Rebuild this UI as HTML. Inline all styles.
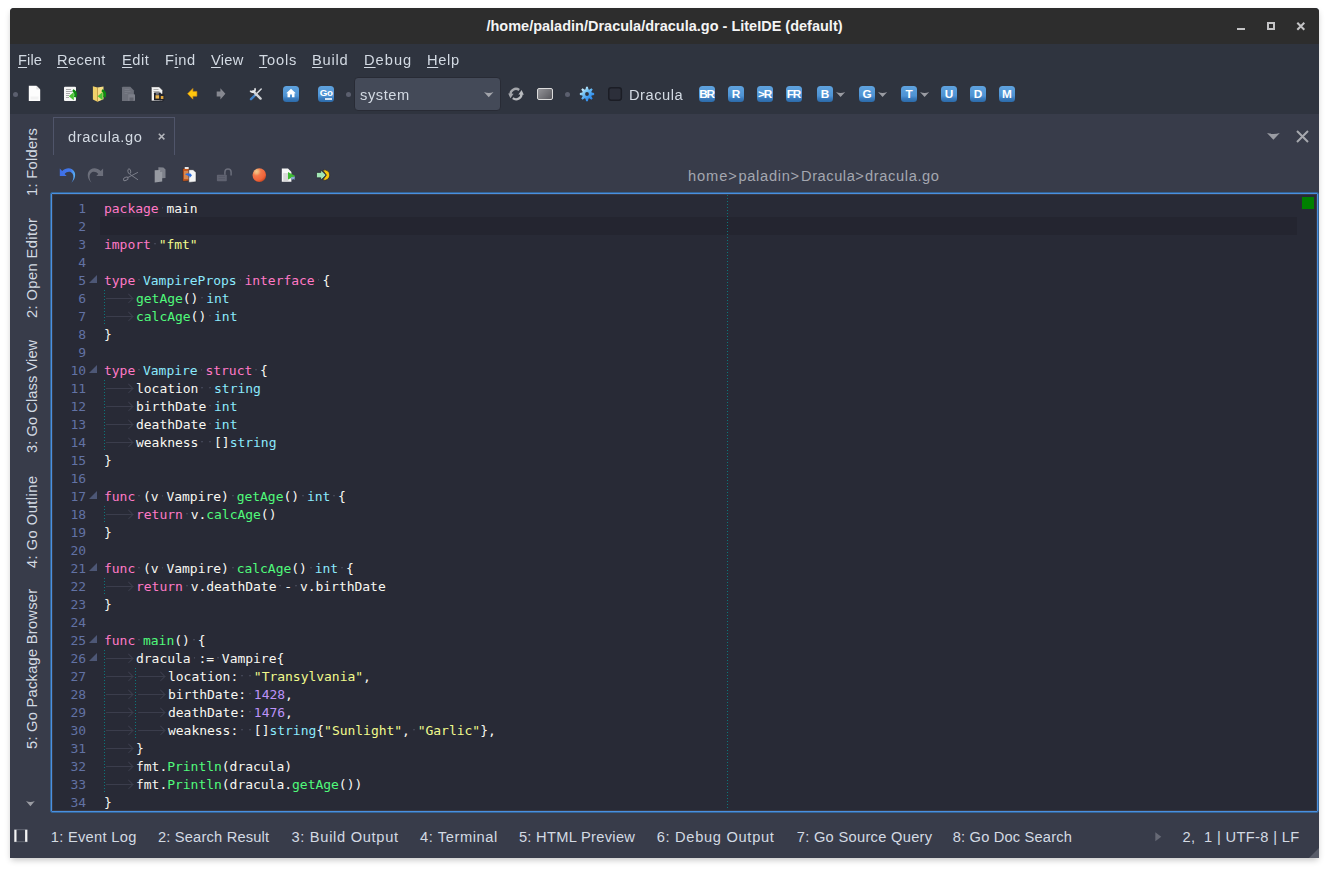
<!DOCTYPE html>
<html lang="en"><head><meta charset="utf-8"><title>/home/paladin/Dracula/dracula.go - LiteIDE (default)</title>
<style>
*{box-sizing:border-box;margin:0;padding:0}
html,body{width:1329px;height:869px;overflow:hidden;background:#fff}
body{position:relative;font-family:"Liberation Sans","DejaVu Sans",sans-serif;font-size:14.67px;color:#d3dae3}
.abs{position:absolute}
#win{position:absolute;left:10px;top:8px;width:1309px;height:850px;background:#383c4a;border-radius:4px 4px 0 0;overflow:hidden;box-shadow:0 0 0 0 transparent}
#shadow{position:absolute;left:10px;top:8px;width:1309px;height:850px;border-radius:4px 4px 0 0;box-shadow:0 3px 6px -1.5px rgba(0,0,0,.23)}
#title{position:absolute;left:0;top:0;width:1309px;height:36px;background:#2d2d2d}
#title .t{position:absolute;left:0;width:1309px;top:9px;text-align:center;font-weight:bold;font-size:14.5px;margin:0;line-height:18px;color:#f4f4f4;white-space:pre}
.ui{position:absolute;white-space:pre;line-height:18px;height:18px;letter-spacing:.3px}
.gs{will-change:transform}
.ui u{text-decoration:underline;text-decoration-thickness:1px;text-underline-offset:2px}
.side{position:absolute;white-space:pre;line-height:18px;height:18px;transform-origin:0 0;transform:rotate(-90deg);letter-spacing:.3px}
svg{position:absolute;overflow:visible}
.bi{position:absolute;width:16px;height:16px;border-radius:3.5px;background:linear-gradient(#5fa2de 0%,#4e93d4 62%,#3a7bbd 78%,#2c6aa8 100%);color:#fff;font-weight:bold;font-size:11.8px;line-height:17px;text-align:center;letter-spacing:-1px;white-space:pre;overflow:hidden}
#ed{position:absolute;left:40px;top:184px;width:1269px;height:621px;background:#282a36;border:1px solid #346496;border-radius:2px;box-shadow:inset 0 0 0 1px #4a90e0,inset 0 0 0 2px #3a3a45}
#edi{position:absolute;left:2px;top:1px;width:1264px;height:618px}
.ln{position:absolute;left:0;height:18px;line-height:18px;white-space:pre;font-family:"DejaVu Sans Mono","Liberation Mono",monospace;font-size:13px;letter-spacing:-0.026px}
.num{position:absolute;left:0;width:33px;text-align:right;color:#6272a4}
.code{position:absolute;left:51px;color:#f8f8f2;tab-size:4}
.kw{color:#ff79c6} .ty{color:#8be9fd} .fn{color:#50fa7b} .st{color:#f1fa8c} .nu{color:#bd93f9}
.sp{background:radial-gradient(circle at 50% 45%,#424555 0,#424555 .55px,transparent 1.05px)}
.tab{display:inline-block;width:32px;height:18px;vertical-align:top;position:relative}
.tab::before{content:"";position:absolute;left:2px;width:27px;top:8px;height:1px;background:#3b3d4c}
.tab::after{content:"";position:absolute;left:21.4px;top:5.3px;width:6.4px;height:6.4px;border-top:1px solid #3b3d4c;border-right:1px solid #3b3d4c;transform:rotate(45deg)}
.fold{position:absolute;left:36px;width:0;height:0;border-left:8px solid transparent;border-bottom:8px solid #4d5776}
.guide{position:absolute;width:1px;background:repeating-linear-gradient(to bottom,#0b777b 0,#0b777b 1px,transparent 1px,transparent 3px)}
</style></head>
<body>
<div id="shadow"></div>
<div id="win">
<header id="title"><h1 class="t">/home/paladin/Dracula/dracula.go - LiteIDE (default)</h1>
<svg style="left:1225px;top:12px" width="74" height="12" viewBox="0 0 74 12"><rect x="2" y="8" width="8" height="2" fill="#c4c4c6"/><rect x="33" y="3" width="6" height="6" fill="none" stroke="#c4c4c6" stroke-width="2"/><path d="M62.3 2.8l7 7M69.3 2.8l-7 7" stroke="#c4c4c6" stroke-width="2" fill="none"/></svg>
</header>
<nav id="menubar" aria-label="Menu bar" style="position:absolute;left:0px;top:36px;width:1309px;height:32px;background:#2f343f">
<div class="ui gs" style="left:8.4px;top:7px;letter-spacing:0.100px;"><u>F</u>ile</div>
<div class="ui gs" style="left:47.22px;top:7px;letter-spacing:0.396px;"><u>R</u>ecent</div>
<div class="ui gs" style="left:112.3px;top:7px;letter-spacing:0.540px;"><u>E</u>dit</div>
<div class="ui gs" style="left:155.44px;top:7px;letter-spacing:0.513px;">F<u>i</u>nd</div>
<div class="ui gs" style="left:201.24px;top:7px;letter-spacing:0.300px;"><u>V</u>iew</div>
<div class="ui gs" style="left:248.8px;top:7px;letter-spacing:0.760px;"><u>T</u>ools</div>
<div class="ui gs" style="left:302.2px;top:7px;letter-spacing:0.740px;"><u>B</u>uild</div>
<div class="ui gs" style="left:354.14px;top:7px;letter-spacing:1.020px;"><u>D</u>ebug</div>
<div class="ui gs" style="left:417.2px;top:7px;letter-spacing:0.647px;"><u>H</u>elp</div>
</nav>
<div id="toolbar" style="position:absolute;left:0px;top:68px;width:1309px;height:38px;background:#2f343f">
<div class="abs" style="left:3px;top:16px;width:5px;height:5px;border-radius:50%;background:#5b5f6e"></div>
<div class="abs" style="left:335.9px;top:16px;width:5px;height:5px;border-radius:50%;background:#5b5f6e"></div>
<div class="abs" style="left:554.9px;top:16px;width:5px;height:5px;border-radius:50%;background:#5b5f6e"></div>
<svg style="left:17px;top:8px" width="16" height="20" viewBox="27 84 16 20"><path d="M28.800 85.800h7.600l3.800 3.800v11.400h-11.400z" fill="#fdfdfd"/><path d="M36.400 85.800v3.800h3.800z" fill="#e4e4e4"/><path d="M30.500 96.500h8v3h-8z" fill="#f3f3f3"/></svg>
<svg style="left:52px;top:8px" width="18" height="20" viewBox="62 84 18 20"><rect x="64" y="86.800" width="12" height="14.200" rx="1" fill="#f6f6f6"/><path d="M66 89.500h5M66 91.500h6M66 93.500h4M66 95.500h3M66 97.500h3" stroke="#a2a2a2" stroke-width=".9"/><path d="M73.200 89.300c3.200 1.200 4.600 4 3.200 8.200l-2.400 -.600c.800-2.600 .200-4.600-1.800-5.600z" fill="#0c8a10"/><path d="M68.800 96.200l5-4.200v8.200z" fill="#4cc437"/></svg>
<svg style="left:81px;top:8px" width="18" height="20" viewBox="91 84 18 20"><path d="M92.900 86.200l4.600 1.400v14.100l-4.600-2.200z" fill="#f0d16a"/><path d="M97.500 87.600l6-1v12.600l-6 2.500z" fill="#f6dd85"/><path d="M97.500 87.600v14.100" stroke="#c79a3a" stroke-width=".7"/><path d="M102.400 89.300c3.200 1.200 4.600 4 3.200 8.200l-2.400 -.600c.800-2.600 .200-4.600-1.800-5.600z" fill="#0c8a10"/><path d="M97.600 96.200l5-4.200v8.200z" fill="#4cc437"/></svg>
<svg style="left:110px;top:8px" width="18" height="20" viewBox="120 84 18 20"><path d="M122.700 86.800h7.600l3.600 3.600v10.600h-11.900v-13.500z" fill="#6d707a"/><rect x="128.200" y="94.200" width="6.800" height="6.800" rx=".8" fill="#7c7f89"/><rect x="129.500" y="97.500" width="4" height="3.500" fill="#62656f"/><path d="M124.500 89.500h5M124.500 91.500h6M124.500 93.500h3" stroke="#7b7e88" stroke-width=".8"/></svg>
<svg style="left:139px;top:8px" width="18" height="20" viewBox="149 84 18 20"><path d="M151.800 86.700h7.400l3.600 3.600v10.800h-11.600v-13.800z" fill="#f2f2f2" stroke="#20222a" stroke-width=".8"/><path d="M153.500 89.500h5M153.500 91.500h6" stroke="#9a9a9a" stroke-width=".8"/><rect x="154" y="92.600" width="6.800" height="7.600" rx=".6" fill="#1d1e25"/><rect x="155.500" y="95.200" width="3.800" height="3.400" fill="#e8b44c"/><rect x="155.800" y="93.200" width="3" height="1.400" fill="#8d8f98"/><rect x="159.400" y="93.800" width="5" height="6.600" rx=".6" fill="#24252d"/><rect x="160.800" y="96" width="2.600" height="3" fill="#e0a63c"/></svg>
<svg style="left:174px;top:8px" width="16" height="20" viewBox="184 84 16 20"><path d="M187.600 93.700l5.300-5.300v3h4v4.800h-4v3z" fill="#ffc70d" stroke="#d98d14" stroke-width=".6" stroke-linejoin="round"/></svg>
<svg style="left:203px;top:8px" width="16" height="20" viewBox="213 84 16 20"><path d="M225.400 93.800l-5-5.600v3.200h-3.700v5h3.700v3.200z" fill="#868890"/></svg>
<svg style="left:237px;top:8px" width="18" height="20" viewBox="247 84 18 20"><path d="M251 99.200l4.200-4.200" stroke="#3d7fc6" stroke-width="2.400" stroke-linecap="round"/><path d="M255.200 95l6-6" stroke="#d5d8dc" stroke-width="1.500" stroke-linecap="round"/><path d="M253.200 91.200l7.400 7.400" stroke="#d0d3d7" stroke-width="2.400" stroke-linecap="round"/><path d="M250.300 90.600a2.700 2.700 0 0 0 3.400 1.400a2.700 2.700 0 0 0 1-3.800" fill="none" stroke="#e6e8ea" stroke-width="1.700"/></svg>
<div class="bi" style="left:273px;top:10px"></div>
<svg style="left:273px;top:10px" width="16" height="16" viewBox="283 86 16 16"><path d="M291 88.800l4.800 4.400h-1.300v4h-2.500v-2.600h-2v2.600h-2.500v-4h-1.300z" fill="#fff"/></svg>
<div class="bi" style="left:308px;top:10px;font-size:9.800px;letter-spacing:-.4px;line-height:14px;text-align:left;padding-left:1.700px">Go</div>
<div class="abs" style="left:314.8px;top:21.9px;width:6.800px;height:1.800px;background:#d4e2f0"></div>
<div class="abs" style="left:344px;top:1px;width:147px;height:34px;border-radius:4px;background:#444a58;border:1px solid #282b35"></div>
<div class="ui gs" style="left:350.2px;top:10px;letter-spacing:0.578px;">system</div>
<svg style="left:474px;top:16px" width="10" height="6" viewBox="0 0 10 6"><path d="M0 0q5 2 9.500 0l-4.750 5.200z" fill="#a3a5ab"/></svg>
<svg style="left:497px;top:10px" width="18" height="16" viewBox="507 86 18 16"><path d="M510.600 95.200a5.400 5.400 0 0 1 8.600-5.200" fill="none" stroke="#a4a6ab" stroke-width="2.300"/><path d="M508.200 93.400l5.400 .4-3.200 4.400z" fill="#a4a6ab"/><path d="M521.400 93a5.400 5.400 0 0 1-8.600 5.200" fill="none" stroke="#b9bbbf" stroke-width="2.300"/><path d="M523.800 94.800l-5.400-.4 3.200-4.400z" fill="#b9bbbf"/></svg>
<div class="abs" style="left:527.2px;top:11.7px;width:15.400px;height:12.500px;border-radius:2px;border:1.300px solid #dcdcdc;background:linear-gradient(135deg,#8d8d92 10%,#5c5c62 90%)"></div>
<svg style="left:569px;top:10px" width="16" height="16" viewBox="579 86 16 16"><defs><linearGradient id="gg" gradientUnits="userSpaceOnUse" x1="581" y1="88" x2="592" y2="100"><stop offset="0" stop-color="#eaf7fb"/><stop offset=".35" stop-color="#7cc8f4"/><stop offset=".7" stop-color="#3f9cf0"/><stop offset="1" stop-color="#2b7fe0"/></linearGradient></defs><path d="M585.55 89.32L586.07 86.86L587.93 86.86L588.45 89.32L589.29 89.67L591.39 88.29L592.71 89.61L591.33 91.71L591.68 92.55L594.14 93.07L594.14 94.93L591.68 95.45L591.33 96.29L592.71 98.39L591.39 99.71L589.29 98.33L588.45 98.68L587.93 101.14L586.07 101.14L585.55 98.68L584.71 98.33L582.61 99.71L581.29 98.39L582.67 96.29L582.32 95.45L579.86 94.93L579.86 93.07L582.32 92.55L582.67 91.71L581.29 89.61L582.61 88.29L584.71 89.67ZM585.10 94.00a1.9 1.9 0 1 0 3.8 0a1.9 1.9 0 1 0 -3.8 0Z" fill="url(#gg)" fill-rule="evenodd"/></svg>
<svg style="left:597px;top:10px" width="16" height="16" viewBox="607 86 16 16"><rect x="608.750" y="87.650" width="12.600" height="12.600" rx="2.400" fill="#2c2f3a" stroke="#1b1d25" stroke-width="1.500"/></svg>
<div class="ui gs" style="left:619.02px;top:10px;letter-spacing:0.536px;">Dracula</div>
<div class="bi" style="left:689px;top:10px;letter-spacing:-1.200px;padding-right:1px;">BR</div>
<div class="bi" style="left:718px;top:10px;letter-spacing:0;">R</div>
<div class="bi" style="left:747px;top:10px;letter-spacing:-1.200px;padding-right:1px;">&gt;R</div>
<div class="bi" style="left:776px;top:10px;letter-spacing:-1.200px;padding-right:1px;">FR</div>
<div class="bi" style="left:807px;top:10px;letter-spacing:0;">B</div>
<div class="bi" style="left:849px;top:10px;letter-spacing:0;">G</div>
<div class="bi" style="left:891px;top:10px;letter-spacing:0;">T</div>
<div class="bi" style="left:931px;top:10px;letter-spacing:0;">U</div>
<div class="bi" style="left:960px;top:10px;letter-spacing:0;">D</div>
<div class="bi" style="left:989px;top:10px;letter-spacing:0;">M</div>
<svg style="left:825.8px;top:16px" width="10" height="6" viewBox="0 0 10 6"><path d="M0 0q4.600 2 9.200 0l-4.600 5z" fill="#9a9ca3"/></svg>
<svg style="left:868px;top:16px" width="10" height="6" viewBox="0 0 10 6"><path d="M0 0q4.600 2 9.200 0l-4.600 5z" fill="#9a9ca3"/></svg>
<svg style="left:910.3px;top:16px" width="10" height="6" viewBox="0 0 10 6"><path d="M0 0q4.600 2 9.200 0l-4.600 5z" fill="#9a9ca3"/></svg>
</div>
<aside id="sidebar" style="position:absolute;left:0px;top:106px;width:40px;height:698px;">
<div class="side" style="left:12.5px;top:81.84px;letter-spacing:0.300px">1: Folders</div>
<div class="side" style="left:12.5px;top:204.26px;letter-spacing:0.410px">2: Open Editor</div>
<div class="side" style="left:12.5px;top:339.16px;letter-spacing:0.071px">3: Go Class View</div>
<div class="side" style="left:12.5px;top:453.8px;letter-spacing:0.473px">4: Go Outline</div>
<div class="side" style="left:12.5px;top:634.7px;letter-spacing:0.264px">5: Go Package Browser</div>
<svg style="left:16px;top:687px" width="9" height="6" viewBox="0 0 9 6"><path d="M0 0q4.400 1.800 8.800 0l-4.400 5.200z" fill="#9a9ca3"/></svg>
</aside>
<div id="tabbar" style="position:absolute;left:40px;top:106px;width:1269px;height:43px;">
<div class="abs" style="left:3px;top:3px;width:122px;height:38px;border:1px solid #50556a;border-bottom:0"></div>
<div class="ui gs" style="left:18px;top:13.5px;letter-spacing:0.612px;">dracula.go</div>
<svg style="left:108px;top:19px" width="8" height="8" viewBox="0 0 8 8"><path d="M.800 .800l5.600 5.600M6.400 .800l-5.600 5.600" stroke="#b4b6bc" stroke-width="1.500" fill="none"/></svg>
<svg style="left:1216.5px;top:18.5px" width="13" height="7" viewBox="0 0 13 7"><path d="M0 0q6.400 1.800 12.800 0l-6.400 6.800z" fill="#9a9ca3"/></svg>
<svg style="left:1245.5px;top:15.5px" width="13" height="13" viewBox="0 0 13 13"><path d="M1 1l11 11M12 1l-11 11" stroke="#a6a8ae" stroke-width="2" fill="none"/></svg>
</div>
<div id="edittools" style="position:absolute;left:40px;top:149px;width:1269px;height:35px;">
<svg style="left:8px;top:9px" width="20" height="18" viewBox="58 166 20 18"><defs><linearGradient id="ug" x1="0" x2="1"><stop offset="0" stop-color="#3f6fe6"/><stop offset=".7" stop-color="#4278ea"/><stop offset="1" stop-color="#5ab4f4"/></linearGradient></defs><path d="M59.800 168.600V176H66.600L64.600 174C66.800 171.200 70.800 170.900 72.600 173.800C73.900 176 73.700 179.300 71.400 182.700C74.800 179.700 76 175.400 74.500 172C72.500 167.700 66.600 166.600 62.200 171Z" fill="url(#ug)"/></svg>
<svg style="left:36px;top:9px" width="20" height="18" viewBox="86 166 20 18"><path d="M103.100 168.600V176H96.300L98.300 174C96.100 171.200 92.100 170.900 90.300 173.800C89 176 89.200 179.300 91.500 182.700C88.100 179.700 86.900 175.400 88.400 172C90.400 167.700 96.300 166.600 100.700 171Z" fill="#6c6f7b"/></svg>
<svg style="left:72px;top:9px" width="18" height="18" viewBox="122 166 18 18"><g fill="none" stroke="#80838e" stroke-width=".9"><path d="M138 172.300l-10.500 5.400M138 179.800l-8.200-5.600"/><ellipse cx="125.800" cy="178.800" rx="2.500" ry="1.500" transform="rotate(-28 125.800 178.800)"/><ellipse cx="129.300" cy="171.300" rx="1.400" ry="2.500" transform="rotate(-10 129.300 171.300)"/></g></svg>
<svg style="left:103px;top:9px" width="16" height="18" viewBox="153 166 16 18"><path d="M158.400 167.200l5 .2 2.100 2v8.600l-7.100 .4z" fill="#7f828c"/><path d="M154.700 170.300l5.400-.3 2.100 2.100v9.300l-7.500 1.200z" fill="#979aa2"/><path d="M160.100 170v2.100h2.100z" fill="#7b7e88"/></svg>
<svg style="left:131px;top:9px" width="17" height="18" viewBox="181 166 17 18"><path d="M182.800 168.500l6.600-.4v12.600l-6.600 .6z" fill="#c8581d" stroke="#23252f" stroke-width=".5"/><rect x="184.700" y="167.100" width="4" height="2" rx=".5" fill="#e8e8e8"/><path d="M184 171h4.500v8h-4.500z" fill="#d9884f"/><path d="M188.800 169.700h4.400l2.800 2.800v9.300l-7.200 .6z" fill="#f5f5f5" stroke="#23252f" stroke-width=".5"/><path d="M185 174.200c2-1.200 3.600-1.100 4.600-.2v-1.300l2.400 2.600-2.400 2.600v-1.400c-1.400-.9-2.800-1.400-4.600-2.300z" fill="#2f6fdc"/></svg>
<svg style="left:166px;top:9px" width="17" height="18" viewBox="216 166 17 18"><rect x="216.900" y="174.700" width="9.900" height="6.500" rx=".8" fill="#5f6270"/><path d="M218.500 176.500h6.500M218.500 178.500h6.500" stroke="#555866" stroke-width=".8"/><path d="M224.900 174.700v-2.600a3.100 3.100 0 0 1 6.200 0v3.300" fill="none" stroke="#6b6e7b" stroke-width="1.500"/></svg>
<svg style="left:202px;top:11px" width="15" height="15" viewBox="252 168 15 15"><defs><radialGradient id="rb" cx=".3" cy=".24" r=".8"><stop offset="0" stop-color="#f3c88c"/><stop offset=".18" stop-color="#f2b074"/><stop offset=".4" stop-color="#f4784a"/><stop offset=".8" stop-color="#f0643a"/><stop offset="1" stop-color="#cf4a22"/></radialGradient></defs><circle cx="259.300" cy="175.100" r="6.800" fill="url(#rb)"/></svg>
<svg style="left:231px;top:11px" width="16" height="15" viewBox="281 168 16 15"><path d="M281.800 168.600h6.200l3.400 3.400v9.700h-9.600z" fill="#f7f7f7"/><path d="M283.300 174h5M283.300 176h5M283.300 178h5M283.300 180h5" stroke="#b2b2b2" stroke-width=".9"/><path d="M288 172l7.300 3.900-7.300 3.600z" fill="#3fbb33"/><path d="M290.800 177.200l4.200-.7-.6 3.600-1.200-1.200-1.400 1z" fill="#8aa9cf"/></svg>
<svg style="left:265px;top:11px" width="16" height="14" viewBox="315 168 16 14"><path d="M322.800 170.200a5.200 5.200 0 1 1 0 9.800l3.600-4.900z" fill="#f8c60c" stroke="#23252f" stroke-width=".7"/><path d="M316.500 172.400h4.300v-2.400l5.200 5.100-5.200 5.100v-2.400h-4.300z" fill="#a2e6b4" stroke="#23252f" stroke-width=".7" stroke-linejoin="round"/></svg>
<div class="ui" style="left:638px;top:9.5px;letter-spacing:0.900px;color:#a4a7b0">home&gt;</div>
<div class="ui" style="left:688.44px;top:9.5px;letter-spacing:0.689px;color:#a4a7b0">paladin&gt;</div>
<div class="ui" style="left:751px;top:9.5px;letter-spacing:0.551px;color:#a4a7b0">Dracula&gt;</div>
<div class="ui" style="left:815px;top:9.5px;letter-spacing:0.620px;color:#a4a7b0">dracula.go</div>
</div>
<main id="ed"><div id="edi">
<div class="abs" style="left:47px;top:23px;width:1197px;height:18px;background:#242530"></div>
<div class="guide" style="left:674px;top:1px;height:615px"></div>
<div class="abs" style="left:1249px;top:3px;width:12px;height:12px;background:#008000"></div>
<div class="ln num" style="top:6px">1</div>
<div class="ln code" style="top:6px"><span class="kw">package</span><span class="sp"> </span>main</div>
<div class="ln num" style="top:24px">2</div>
<div class="ln num" style="top:42px">3</div>
<div class="ln code" style="top:42px"><span class="kw">import</span><span class="sp"> </span><span class="st">"fmt"</span></div>
<div class="ln num" style="top:60px">4</div>
<div class="ln num" style="top:78px">5</div>
<div class="fold" style="top:81px"></div>
<div class="ln code" style="top:78px"><span class="kw">type</span><span class="sp"> </span><span class="ty">VampireProps</span><span class="sp"> </span><span class="kw">interface</span><span class="sp"> </span>{</div>
<div class="ln num" style="top:96px">6</div>
<div class="ln code" style="top:96px"><span class="tab">	</span><span class="fn">getAge</span>()<span class="sp"> </span><span class="ty">int</span></div>
<div class="ln num" style="top:114px">7</div>
<div class="ln code" style="top:114px"><span class="tab">	</span><span class="fn">calcAge</span>()<span class="sp"> </span><span class="ty">int</span></div>
<div class="ln num" style="top:132px">8</div>
<div class="ln code" style="top:132px">}</div>
<div class="ln num" style="top:150px">9</div>
<div class="ln num" style="top:168px">10</div>
<div class="fold" style="top:171px"></div>
<div class="ln code" style="top:168px"><span class="kw">type</span><span class="sp"> </span><span class="ty">Vampire</span><span class="sp"> </span><span class="kw">struct</span><span class="sp"> </span>{</div>
<div class="ln num" style="top:186px">11</div>
<div class="ln code" style="top:186px"><span class="tab">	</span>location<span class="sp"> </span><span class="sp"> </span><span class="ty">string</span></div>
<div class="ln num" style="top:204px">12</div>
<div class="ln code" style="top:204px"><span class="tab">	</span>birthDate<span class="sp"> </span><span class="ty">int</span></div>
<div class="ln num" style="top:222px">13</div>
<div class="ln code" style="top:222px"><span class="tab">	</span>deathDate<span class="sp"> </span><span class="ty">int</span></div>
<div class="ln num" style="top:240px">14</div>
<div class="ln code" style="top:240px"><span class="tab">	</span>weakness<span class="sp"> </span><span class="sp"> </span>[]<span class="ty">string</span></div>
<div class="ln num" style="top:258px">15</div>
<div class="ln code" style="top:258px">}</div>
<div class="ln num" style="top:276px">16</div>
<div class="ln num" style="top:294px">17</div>
<div class="fold" style="top:297px"></div>
<div class="ln code" style="top:294px"><span class="kw">func</span><span class="sp"> </span>(v<span class="sp"> </span>Vampire)<span class="sp"> </span><span class="fn">getAge</span>()<span class="sp"> </span><span class="ty">int</span><span class="sp"> </span>{</div>
<div class="ln num" style="top:312px">18</div>
<div class="ln code" style="top:312px"><span class="tab">	</span><span class="kw">return</span><span class="sp"> </span>v.<span class="fn">calcAge</span>()</div>
<div class="ln num" style="top:330px">19</div>
<div class="ln code" style="top:330px">}</div>
<div class="ln num" style="top:348px">20</div>
<div class="ln num" style="top:366px">21</div>
<div class="fold" style="top:369px"></div>
<div class="ln code" style="top:366px"><span class="kw">func</span><span class="sp"> </span>(v<span class="sp"> </span>Vampire)<span class="sp"> </span><span class="fn">calcAge</span>()<span class="sp"> </span><span class="ty">int</span><span class="sp"> </span>{</div>
<div class="ln num" style="top:384px">22</div>
<div class="ln code" style="top:384px"><span class="tab">	</span><span class="kw">return</span><span class="sp"> </span>v.deathDate<span class="sp"> </span>-<span class="sp"> </span>v.birthDate</div>
<div class="ln num" style="top:402px">23</div>
<div class="ln code" style="top:402px">}</div>
<div class="ln num" style="top:420px">24</div>
<div class="ln num" style="top:438px">25</div>
<div class="fold" style="top:441px"></div>
<div class="ln code" style="top:438px"><span class="kw">func</span><span class="sp"> </span><span class="fn">main</span>()<span class="sp"> </span>{</div>
<div class="ln num" style="top:456px">26</div>
<div class="fold" style="top:459px"></div>
<div class="ln code" style="top:456px"><span class="tab">	</span>dracula<span class="sp"> </span>:=<span class="sp"> </span>Vampire{</div>
<div class="ln num" style="top:474px">27</div>
<div class="ln code" style="top:474px"><span class="tab">	</span><span class="tab">	</span>location:<span class="sp"> </span><span class="sp"> </span><span class="st">"Transylvania"</span>,</div>
<div class="ln num" style="top:492px">28</div>
<div class="ln code" style="top:492px"><span class="tab">	</span><span class="tab">	</span>birthDate:<span class="sp"> </span><span class="nu">1428</span>,</div>
<div class="ln num" style="top:510px">29</div>
<div class="ln code" style="top:510px"><span class="tab">	</span><span class="tab">	</span>deathDate:<span class="sp"> </span><span class="nu">1476</span>,</div>
<div class="ln num" style="top:528px">30</div>
<div class="ln code" style="top:528px"><span class="tab">	</span><span class="tab">	</span>weakness:<span class="sp"> </span><span class="sp"> </span>[]<span class="ty">string</span>{<span class="st">"Sunlight"</span>,<span class="sp"> </span><span class="st">"Garlic"</span>},</div>
<div class="ln num" style="top:546px">31</div>
<div class="ln code" style="top:546px"><span class="tab">	</span>}</div>
<div class="ln num" style="top:564px">32</div>
<div class="ln code" style="top:564px"><span class="tab">	</span>fmt.<span class="fn">Println</span>(dracula)</div>
<div class="ln num" style="top:582px">33</div>
<div class="ln code" style="top:582px"><span class="tab">	</span>fmt.<span class="fn">Println</span>(dracula.<span class="fn">getAge</span>())</div>
<div class="ln num" style="top:600px">34</div>
<div class="ln code" style="top:600px">}</div>
<div class="guide" style="left:51px;top:96px;height:36px"></div>
<div class="guide" style="left:51px;top:186px;height:72px"></div>
<div class="guide" style="left:51px;top:312px;height:18px"></div>
<div class="guide" style="left:51px;top:384px;height:18px"></div>
<div class="guide" style="left:51px;top:456px;height:144px"></div>
<div class="guide" style="left:82px;top:474px;height:72px"></div>
</div></main>
<footer id="statusbar" style="position:absolute;left:0px;top:804px;width:1309px;height:46px;">
<svg style="left:4px;top:17px" width="15" height="14" viewBox="0 0 15 14"><rect x=".500" y=".800" width="13" height="12" fill="none" stroke="#7f828d" stroke-width=".600"/><rect x=".400" y=".800" width="2.100" height="12" fill="#f4f4f4"/><rect x="11.100" y=".800" width="2.100" height="12" fill="#f4f4f4"/></svg>
<div class="ui" style="left:40.7px;top:15.5px;letter-spacing:0.300px;">1: Event Log</div>
<div class="ui" style="left:147.9px;top:15.5px;letter-spacing:0.193px;">2: Search Result</div>
<div class="ui" style="left:281.5px;top:15.5px;letter-spacing:0.689px;">3: Build Output</div>
<div class="ui" style="left:410.1px;top:15.5px;letter-spacing:0.580px;">4: Terminal</div>
<div class="ui" style="left:508.92px;top:15.5px;letter-spacing:0.300px;">5: HTML Preview</div>
<div class="ui" style="left:646.7px;top:15.5px;letter-spacing:0.689px;">6: Debug Output</div>
<div class="ui" style="left:786.7px;top:15.5px;letter-spacing:0.300px;">7: Go Source Query</div>
<div class="ui" style="left:942.78px;top:15.5px;letter-spacing:0.172px;">8: Go Doc Search</div>
<svg style="left:1145px;top:20px" width="7" height="10" viewBox="0 0 7 10"><path d="M.300 .300l6 4.500-6 4.500z" fill="#666975"/></svg>
<div class="ui" style="left:1172.4px;top:15.5px;letter-spacing:0.338px;">2,  1 | UTF-8 | LF</div>
<div class="abs" style="right:0;bottom:0;width:0;height:0;border-left:10px solid transparent;border-bottom:10px solid #585c69"></div>
</footer>
</div>
</body></html>
